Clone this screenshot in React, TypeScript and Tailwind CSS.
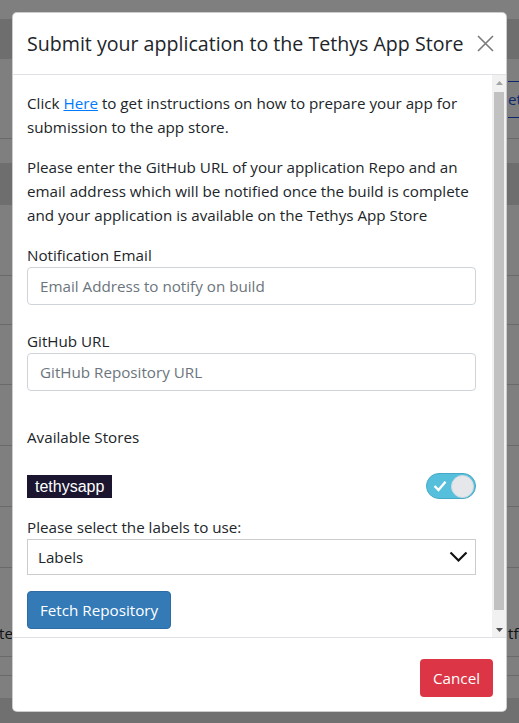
import React from 'react'

const font = { fontFamily: '"Open Sans", "Noto Sans", sans-serif' }

function CloseIcon() {
  return (
    <svg width="17" height="17" viewBox="0 0 17 17" aria-hidden="true">
      <path d="M1 1 L16 16 M16 1 L1 16" stroke="#7a7a7a" strokeWidth="1.6" fill="none" />
    </svg>
  )
}

function Chevron() {
  return (
    <svg width="19" height="12" viewBox="0 0 19 12" aria-hidden="true">
      <polyline points="1.5,1.5 9.5,9.5 17.5,1.5" stroke="#111" strokeWidth="2.2" fill="none" />
    </svg>
  )
}

function Toggle() {
  return (
    <div className="flex h-[26px] w-[50px] items-center justify-between rounded-full border border-[#47a8c6] bg-[#56bfdc] pl-[6px] pr-[1px]">
      <svg width="14" height="12" viewBox="0 0 14 12" aria-hidden="true">
        <polyline points="1.5,6 5.5,10 12.5,1.8" stroke="#fff" strokeWidth="2.4" fill="none" />
      </svg>
      <div className="h-[23px] w-[23px] rounded-full border border-[#cfd8de] bg-[#e6e7eb]" />
    </div>
  )
}

function Scrollbar() {
  return (
    <div className="flex w-[14px] shrink-0 flex-col bg-[#f1f1f1]">
      <div className="flex h-[15px] items-center justify-center">
        <svg width="7" height="4" viewBox="0 0 7 4" aria-hidden="true">
          <polygon points="0,4 3.5,0 7,4" fill="#a3a3a3" />
        </svg>
      </div>
      <div className="mx-[2px] mt-[2px] h-[518px] bg-[#c1c1c1]" />
      <div className="flex-1" />
      <div className="flex h-[15px] items-center justify-center">
        <svg width="7" height="4" viewBox="0 0 7 4" aria-hidden="true">
          <polygon points="0,0 7,0 3.5,4" fill="#505050" />
        </svg>
      </div>
    </div>
  )
}

function Backdrop() {
  return (
    <div className="flex h-full flex-col bg-white text-[15.2px] text-[#212529]" style={font}>
      <div className="h-[19px] shrink-0" />
      <div className="h-[40px] shrink-0 bg-[#dddddd]" />
      <div className="flex h-[80px] shrink-0 items-start justify-end border-b border-[#d4d4d4] pt-[22px]">
        <div className="flex h-[37px] w-[11px] items-center overflow-hidden border-y border-[#1d4fd8] text-[#2151d6]">
          et
        </div>
      </div>
      <div className="h-[24px] shrink-0" />
      <div className="h-[42px] shrink-0 bg-[#dddddd]" />
      <div className="h-[71px] shrink-0 border-b border-[#d4d4d4]" />
      <div className="h-[49px] shrink-0 border-b border-[#d4d4d4]" />
      <div className="h-[60px] shrink-0 border-b border-[#d4d4d4]" />
      <div className="h-[61px] shrink-0 border-b border-[#d4d4d4]" />
      <div className="h-[61px] shrink-0 border-b border-[#d4d4d4]" />
      <div className="h-[61px] shrink-0 border-b border-[#d4d4d4]" />
      <div className="flex h-[89px] shrink-0 items-end justify-between border-b border-[#d4d4d4] pb-[11px] leading-6">
        <span className="-ml-[1px]">te</span>
        <span className="w-[11px] overflow-hidden">tf</span>
      </div>
      <div className="h-[19px] shrink-0 border-b border-[#d4d4d4]" />
      <div className="h-[22px] shrink-0" />
      <div className="flex-1 bg-[#e0e0e0]" />
    </div>
  )
}

export default function App() {
  return (
    <div className="relative h-[723px] w-[519px] overflow-hidden">
      <Backdrop />
      <div className="absolute inset-0 bg-black/50" />
      <div
        className="absolute left-[12px] top-[12px] flex h-[700px] w-[495px] flex-col overflow-hidden rounded-[5px] border border-black/20 bg-white text-[#212529]"
        style={font}
      >
        <div className="flex h-[62px] shrink-0 items-center justify-between border-b border-[#dee2e6] pl-[14px] pr-[12px]">
          <h5 className="whitespace-nowrap text-[19.6px] font-medium leading-[30px]">
            Submit your application to the Tethys App Store
          </h5>
          <button className="flex h-[30px] w-[18px] items-center justify-center">
            <CloseIcon />
          </button>
        </div>

        <div className="flex h-[562px] shrink-0">
          <div className="min-w-0 flex-1 overflow-hidden pb-[22px] pl-[14px] pr-[16px] pt-[16px] text-[15.2px] leading-6">
            <p className="mb-4 whitespace-nowrap">
              Click{' '}
              <a href="#" className="text-[#007bff] underline">
                Here
              </a>{' '}
              to get instructions on how to prepare your app for
              <br />
              submission to the app store.
            </p>
            <p className="mb-4 whitespace-nowrap">
              Please enter the GitHub URL of your application Repo and an
              <br />
              email address which will be notified once the build is complete
              <br />
              and your application is available on the Tethys App Store
            </p>

            <label className="block">Notification Email</label>
            <input
              readOnly
              placeholder="Email Address to notify on build"
              className="block h-[38px] w-full rounded-[4px] border border-[#ced4da] px-[12px] text-[15.2px] outline-none placeholder:text-[#6c757d]"
            />

            <label className="mt-[24px] block">GitHub URL</label>
            <input
              readOnly
              placeholder="GitHub Repository URL"
              className="block h-[38px] w-full rounded-[4px] border border-[#ced4da] px-[12px] text-[15.2px] outline-none placeholder:text-[#6c757d]"
            />

            <div className="mt-[34px]">Available Stores</div>

            <div className="mt-[24px] flex h-[26px] items-center justify-between">
              <span
                className="bg-[#1b1530] px-[8px] text-[16px] leading-[23px] text-white"
                style={{ fontFamily: '"Liberation Sans", Arial, sans-serif' }}
              >
                tethysapp
              </span>
              <Toggle />
            </div>

            <label className="mt-[16px] block">Please select the labels to use:</label>
            <div className="flex h-[36px] items-center justify-between border border-[#cccccc] pl-[10px] pr-[7px]">
              <span>Labels</span>
              <Chevron />
            </div>

            <button className="mt-[16px] h-[38px] rounded-[4px] border border-[#2e6da4] bg-[#337ab7] px-[12px] text-[15.2px] text-white">
              Fetch Repository
            </button>
          </div>
          <Scrollbar />
        </div>

        <div className="flex flex-1 items-start justify-end border-t border-[#dee2e6] pr-[13px] pt-[21px]">
          <button className="h-[38px] rounded-[4px] bg-[#dc3545] px-[13px] text-[15.2px] text-white">
            Cancel
          </button>
        </div>
      </div>
    </div>
  )
}
